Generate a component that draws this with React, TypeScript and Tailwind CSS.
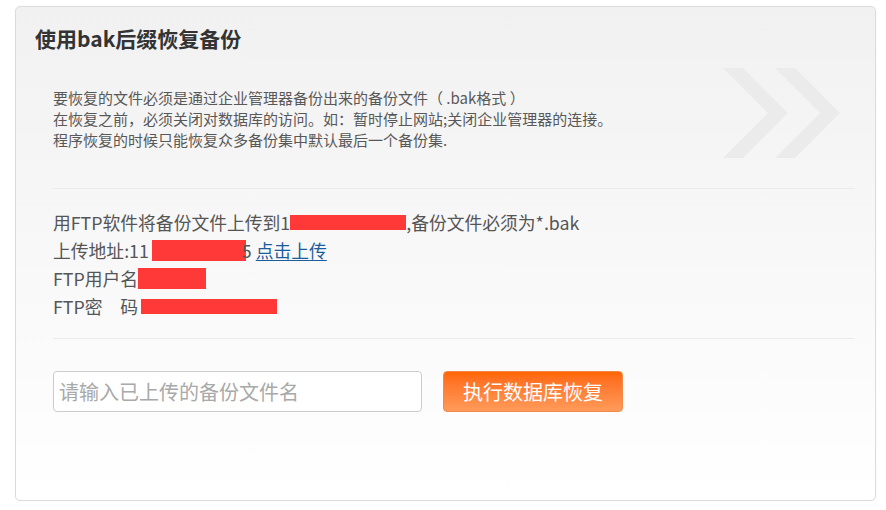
import React from 'react';

const font = "font-['Noto_Sans_CJK_SC','Noto_Sans',sans-serif]";

function Chevrons() {
  return (
    <svg
      className="absolute right-[34px] top-[61px]"
      width="118"
      height="90"
      viewBox="0 0 118 90"
      aria-hidden
    >
      <polygon points="0,0 20,0 65,45 20,90 0,90 45,45" fill="#ebebeb" />
      <polygon points="52,0 72,0 117,45 72,90 52,90 97,45" fill="#ebebeb" />
    </svg>
  );
}

function Redact({ w, h }: { w: string; h: string }) {
  return <span className={`inline-block align-middle bg-[#ff3838] ${w} ${h}`} />;
}

export default function App() {
  return (
    <div className={`w-[886px] h-[510px] bg-white pt-[6px] pl-[15px] ${font}`}>
      <div className="relative w-[861px] h-[495px] rounded-[5px] border border-[#dcdcdc] bg-gradient-to-b from-[#f1f1f1] to-[#ffffff] shadow-[0_0_2px_rgba(0,0,0,0.06)]">
        <Chevrons />

        <h2 className="pl-[19px] pt-[17px] text-[21px] leading-[28px] font-bold text-[#333]">
          使用bak后缀恢复备份
        </h2>

        <div className="pl-[37px] pr-[20px]">
          <div className="pt-[35px] pb-[38px] text-[15px] leading-[21px] text-[#585858]">
            <p>要恢复的文件必须是通过企业管理器备份出来的备份文件（ .bak格式 ）</p>
            <p>在恢复之前，必须关闭对数据库的访问。如：暂时停止网站;关闭企业管理器的连接。</p>
            <p>程序恢复的时候只能恢复众多备份集中默认最后一个备份集.</p>
          </div>

          <div className="h-px bg-[#ebebeb]" />

          <div className="pt-[19px] pb-[18px] text-[17.8px] leading-[28px] text-[#555]">
            <p className="flex items-center h-[28px]">
              <span>用FTP软件将备份文件上传到1</span>
              <Redact w="w-[116px]" h="h-[15px]" />
              <span>,备份文件必须为*.bak</span>
            </p>
            <p className="flex items-center h-[28px]">
              <span>上传地址:11</span>
              <span className="ml-[3px]" />
              <Redact w="w-[94px]" h="h-[21px]" />
              <span className="ml-[-4px]">5</span>
              <a href="#" className="ml-[4px] text-[#1a5c9c] underline underline-offset-2">
                点击上传
              </a>
            </p>
            <p className="flex items-center h-[28px]">
              <span>FTP用户名</span>
              <Redact w="w-[68px]" h="h-[21px]" />
            </p>
            <p className="flex items-center h-[28px]">
              <span>FTP密　码</span>
              <span className="ml-[3px]" />
              <Redact w="w-[136px]" h="h-[15px]" />
            </p>
          </div>

          <div className="h-px bg-[#ebebeb]" />

          <div className="flex items-center gap-[21px] pt-[32px]">
            <input
              type="text"
              placeholder="请输入已上传的备份文件名"
              className="w-[369px] h-[41px] rounded-[4px] border border-[#cccccc] bg-white px-[5px] text-[20px] text-[#555] outline-none placeholder:text-[#a9a9a9]"
            />
            <button className="w-[180px] h-[41px] rounded-[4px] border border-[#f08a4b] bg-gradient-to-b from-[#ff6600] to-[#ff9a58] text-[20px] text-white">
              执行数据库恢复
            </button>
          </div>
        </div>
      </div>
    </div>
  );
}
